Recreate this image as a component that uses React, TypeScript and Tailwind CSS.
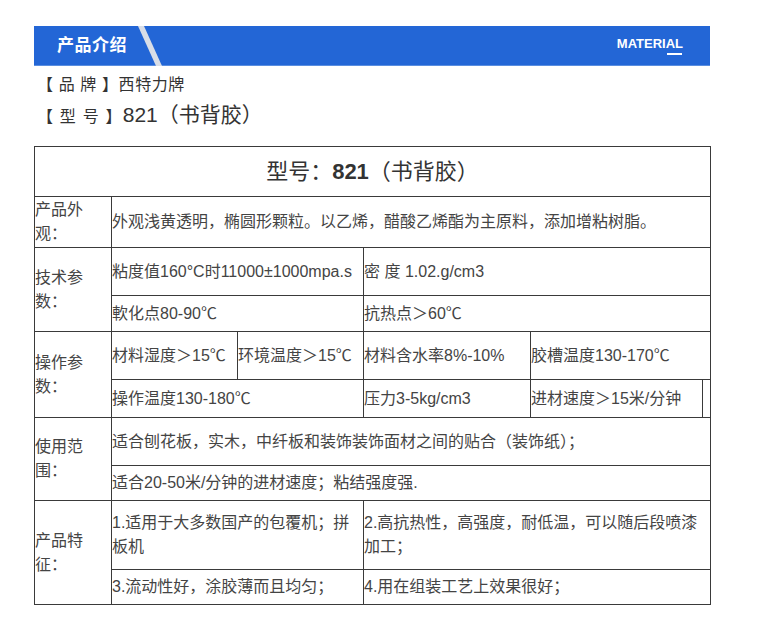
import React from 'react';

const font = { fontFamily: '"Liberation Sans", "Noto Sans CJK SC", sans-serif' };

function Cell({ children, colSpan, rowSpan }: { children?: React.ReactNode; colSpan?: number; rowSpan?: number }) {
  return (
    <td colSpan={colSpan} rowSpan={rowSpan} className="border border-[#3a3a3a] p-0 align-middle text-[16px] leading-[24px] text-[#444]">
      {children}
    </td>
  );
}

export default function App() {
  return (
    <div className="min-h-[625px] bg-white pt-[26px]" style={font}>
      <div className="ml-[34px] w-[676px]">
        <div className="flex h-[40px] items-center bg-[#2366d6] border-b border-[#5a8ee0]">
          <span className="pl-[23px] text-[17px] font-bold tracking-[0.5px] text-white">产品介绍</span>
          <svg width="26" height="40" viewBox="0 0 26 40" className="ml-[10px] self-start">
            <polygon points="1,0 7,0 25,40 19,40" fill="#d9dee7" />
          </svg>
          <div className="ml-auto mr-[27px] flex flex-col items-end">
            <span className="text-[13px] font-bold leading-[16px] text-white">MATERIAL</span>
            <span className="mr-[1px] mt-[1px] h-[2px] w-[15px] bg-white" />
          </div>
        </div>

        <div className="pl-[3px] pt-[4px] text-[#333]">
          <div className="text-[16px] leading-[30px] tracking-[0.6px]">【 品 牌 】西特力牌</div>
          <div className="text-[16px] leading-[30px]">
            <span className="tracking-[1.2px]">【 型 号 】</span>
            <span className="text-[21px]">821（书背胶）</span>
          </div>
        </div>

        <table className="mt-[14px] w-[676px] table-fixed border-collapse border border-[#3a3a3a]">
          <colgroup>
            <col className="w-[77px]" />
            <col className="w-[126px]" />
            <col className="w-[126px]" />
            <col className="w-[167px]" />
            <col className="w-[172px]" />
            <col className="w-[8px]" />
          </colgroup>
          <tbody>
            <tr className="h-[50px]">
              <td colSpan={6} className="border border-[#3a3a3a] text-center text-[22px] text-[#333]">
                型号：<b>821</b>（书背胶）
              </td>
            </tr>
            <tr className="h-[51px]">
              <Cell>产品外<br />观：</Cell>
              <Cell colSpan={5}>外观浅黄透明，椭圆形颗粒。以乙烯，醋酸乙烯酯为主原料，添加增粘树脂。</Cell>
            </tr>
            <tr className="h-[48px]">
              <Cell rowSpan={2}>技术参<br />数：</Cell>
              <Cell colSpan={2}>粘度值160°C时11000±1000mpa.s</Cell>
              <Cell colSpan={3}>密 度 1.02.g/cm3</Cell>
            </tr>
            <tr className="h-[36px]">
              <Cell colSpan={2}>軟化点80-90℃</Cell>
              <Cell colSpan={3}>抗热点＞60℃</Cell>
            </tr>
            <tr className="h-[48px]">
              <Cell rowSpan={2}>操作参<br />数：</Cell>
              <Cell>材料湿度＞15℃</Cell>
              <Cell>环境温度＞15℃</Cell>
              <Cell>材料含水率8%-10%</Cell>
              <Cell colSpan={2}>胶槽温度130-170℃</Cell>
            </tr>
            <tr className="h-[38px]">
              <Cell colSpan={2}>操作温度130-180℃</Cell>
              <Cell>压力3-5kg/cm3</Cell>
              <Cell>进材速度＞15米/分钟</Cell>
              <Cell />
            </tr>
            <tr className="h-[48px]">
              <Cell rowSpan={2}>使用范<br />围：</Cell>
              <Cell colSpan={5}>适合刨花板，实木，中纤板和装饰装饰面材之间的贴合（装饰纸）；</Cell>
            </tr>
            <tr className="h-[35px]">
              <Cell colSpan={5}>适合20-50米/分钟的进材速度；粘结强度强.</Cell>
            </tr>
            <tr className="h-[69px]">
              <Cell rowSpan={2}>产品特<br />征：</Cell>
              <Cell colSpan={2}>1.适用于大多数国产的包覆机；拼板机</Cell>
              <Cell colSpan={3}>2.高抗热性，高强度，耐低温，可以随后段喷漆加工；</Cell>
            </tr>
            <tr className="h-[35px]">
              <Cell colSpan={2}>3.流动性好，涂胶薄而且均匀；</Cell>
              <Cell colSpan={3}>4.用在组装工艺上效果很好；</Cell>
            </tr>
          </tbody>
        </table>
      </div>
    </div>
  );
}
